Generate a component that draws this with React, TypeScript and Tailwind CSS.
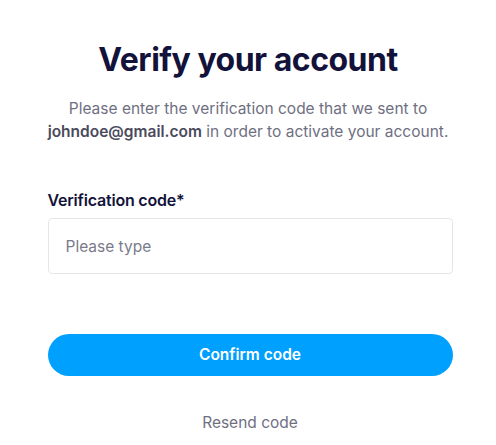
export default function App() {
  return (
    <div
      className="flex min-h-[445px] w-[496px] flex-col items-center bg-white"
      style={{ fontFamily: "Inter, 'Noto Sans', sans-serif" }}
    >
      <h1 className="mt-[39px] text-[32px] font-bold leading-[42px] tracking-[-0.5px] text-[#12123a]">
        Verify your account
      </h1>
      <p className="mt-[16px] text-center text-[15.5px] leading-[23px] text-[#6f6f82]">
        Please enter the verification code that we sent to
        <br />
        <span className="font-semibold text-[#4a4a5c]">johndoe@gmail.com</span>{" "}
        in order to activate your account.
      </p>

      <div className="ml-[4px] mt-[47px] w-[405px]">
        <label className="block text-[16px] font-semibold leading-[20px] tracking-[-0.2px] text-[#12123a]">
          Verification code*
        </label>
        <input
          type="text"
          placeholder="Please type"
          className="mt-[8px] h-[56px] w-full rounded-[4px] border border-[#e6e6ea] px-[17px] text-[15.5px] text-[#12123a] outline-none placeholder:text-[#7a7a8a]"
        />
        <button
          type="button"
          className="mt-[60px] h-[42px] w-full rounded-full bg-[#00a0ff] text-[15.5px] font-semibold text-white"
        >
          Confirm code
        </button>
        <div className="mt-[35px] text-center text-[15.5px] text-[#6f6f82]">
          Resend code
        </div>
      </div>
    </div>
  );
}
